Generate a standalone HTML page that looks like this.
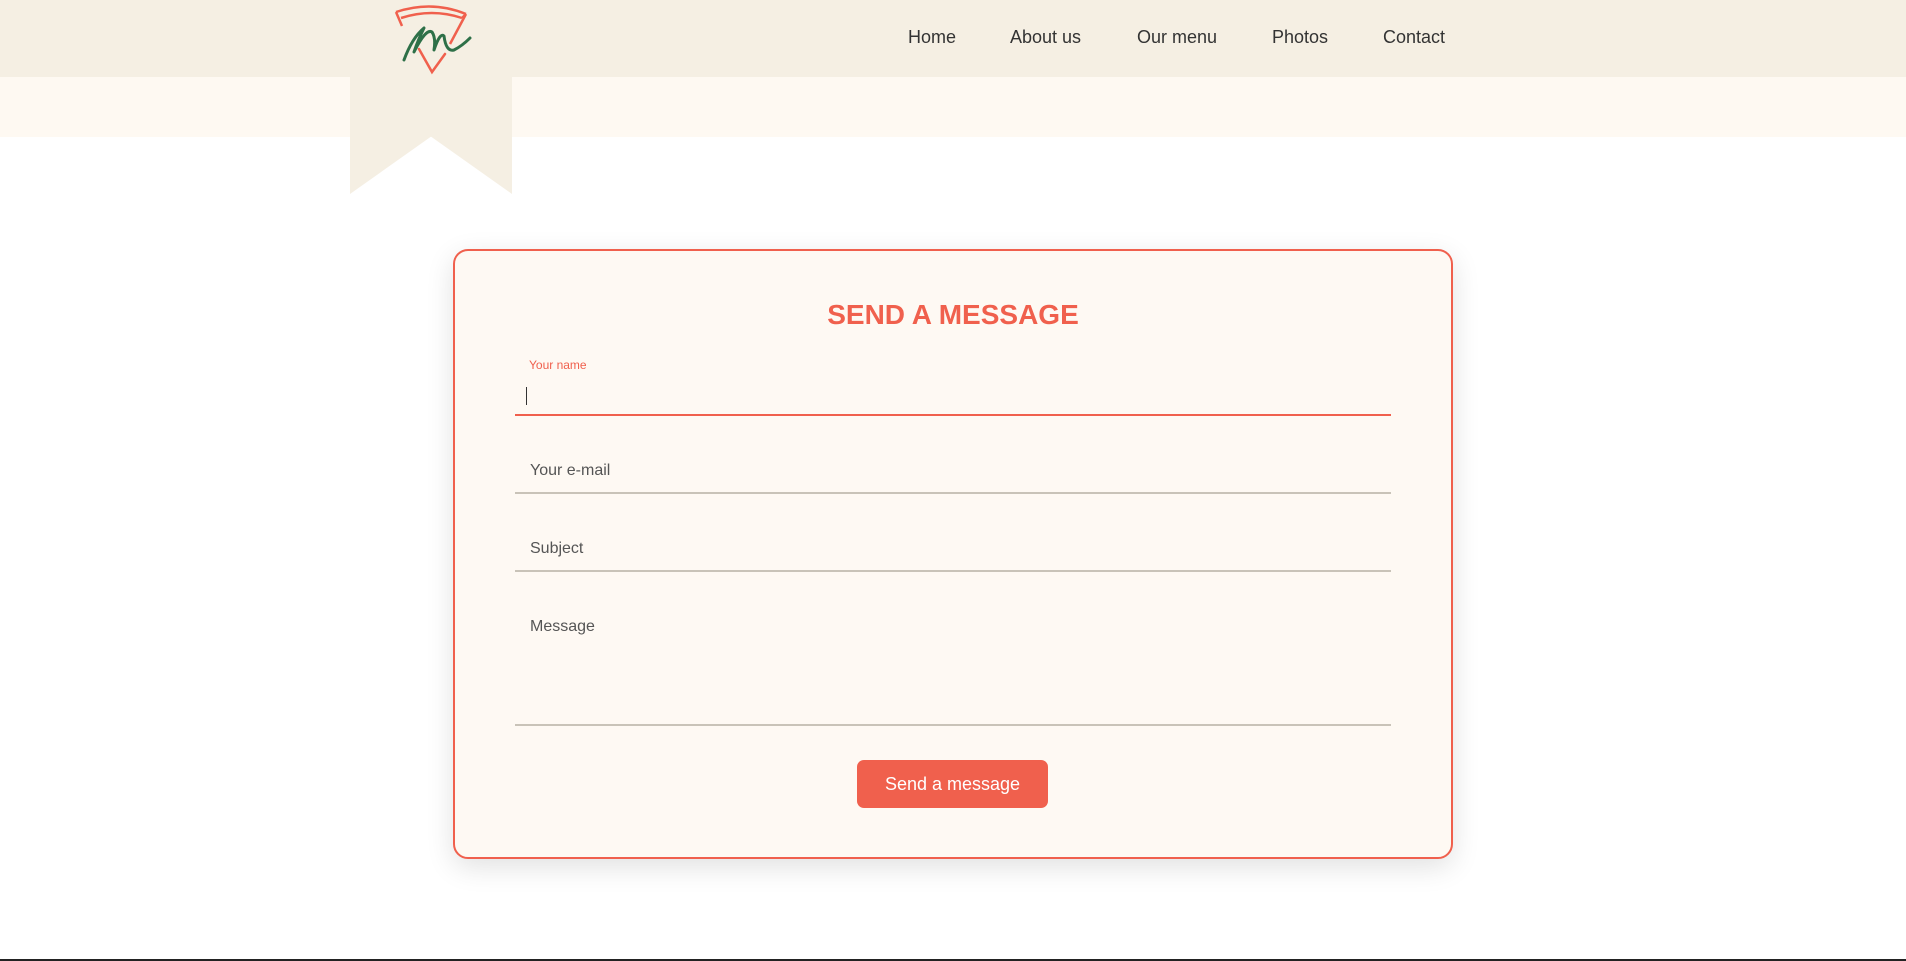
<!DOCTYPE html>
<html><head><meta charset="utf-8"><style>
*{margin:0;padding:0;box-sizing:border-box}
html,body{width:1906px;height:961px;overflow:hidden;background:#fff;font-family:"Liberation Sans",Arial,sans-serif;position:relative}
.hdr{position:absolute;left:0;top:0;width:1906px;height:77px;background:#f5efe3}
.band{position:absolute;left:0;top:77px;width:1906px;height:60px;background:#fef9f2}
.ribbon{position:absolute;left:350px;top:77px;width:162px;height:117px;background:#f5efe3;clip-path:polygon(0 0,100% 0,100% 100%,50% 51%,0 100%)}
.logo{position:absolute;left:392px;top:2px}
.nav a{position:absolute;top:27px;font-size:18px;color:#333;text-decoration:none}
.card{position:absolute;left:453px;top:249px;width:1000px;height:610px;background:#fef9f3;border:2px solid #f0604d;border-radius:15px;box-shadow:0 8px 28px rgba(0,0,0,.12)}
h1{position:absolute;left:0;width:100%;top:48px;text-align:center;color:#f0604d;font-size:28px;font-weight:bold}
.f{position:absolute;left:60px;width:876px;border-bottom:2px solid #c9c3b8}
.ph{position:absolute;left:15px;font-size:16px;color:#555}
.btn{position:absolute;left:402px;top:509px;width:191px;height:48px;background:#f0604d;border-radius:7px;color:#fff;font-size:18px;text-align:center;line-height:48px}
.bot{position:absolute;left:0;top:959px;width:1906px;height:2px;background:#222}
</style></head><body>
<div class="hdr"></div><div class="band"></div><div class="ribbon"></div>
<svg class="logo" width="80" height="74" viewBox="0 0 80 74">
<path d="M4 10 Q40 -2 74 12" fill="none" stroke="#f0604d" stroke-width="2.5"/>
<path d="M9 16 Q40 6 70 16" fill="none" stroke="#f0604d" stroke-width="2.5"/>
<path d="M4 10 L10 24 M74 12 L58 42 M70 16 L74 12" stroke="#f0604d" stroke-width="2.5" fill="none"/>
<path d="M27 47 L40 70 L53 52" stroke="#f0604d" stroke-width="2.5" fill="none" stroke-linecap="round"/>
<path d="M12 58 Q20 36 32 26 Q26 38 22 50 Q34 26 40 30 Q44 36 42 48 Q48 30 52 34 Q54 50 62 48 Q70 44 78 36" stroke="#2e7048" stroke-width="3" fill="none" stroke-linecap="round" stroke-linejoin="round"/>
</svg>
<div class="nav"><a style="left:908px">Home</a><a style="left:1010px">About us</a><a style="left:1137px">Our menu</a><a style="left:1272px">Photos</a><a style="left:1383px">Contact</a></div>
<div class="card">
<h1>SEND A MESSAGE</h1>
<div style="position:absolute;left:74px;top:107px;font-size:12px;color:#f0604d">Your name</div>
<div class="f" style="top:112px;height:53px;border-bottom-color:#f0604d"><div style="position:absolute;left:11px;top:24px;width:1px;height:18px;background:#333"></div></div>
<div class="f" style="top:190px;height:53px"><div class="ph" style="top:21px">Your e-mail</div></div>
<div class="f" style="top:268px;height:53px"><div class="ph" style="top:21px">Subject</div></div>
<div class="f" style="top:346px;height:129px"><div class="ph" style="top:21px">Message</div></div>
<div class="btn">Send a message</div>
</div>
<div class="bot"></div>
</body></html>
